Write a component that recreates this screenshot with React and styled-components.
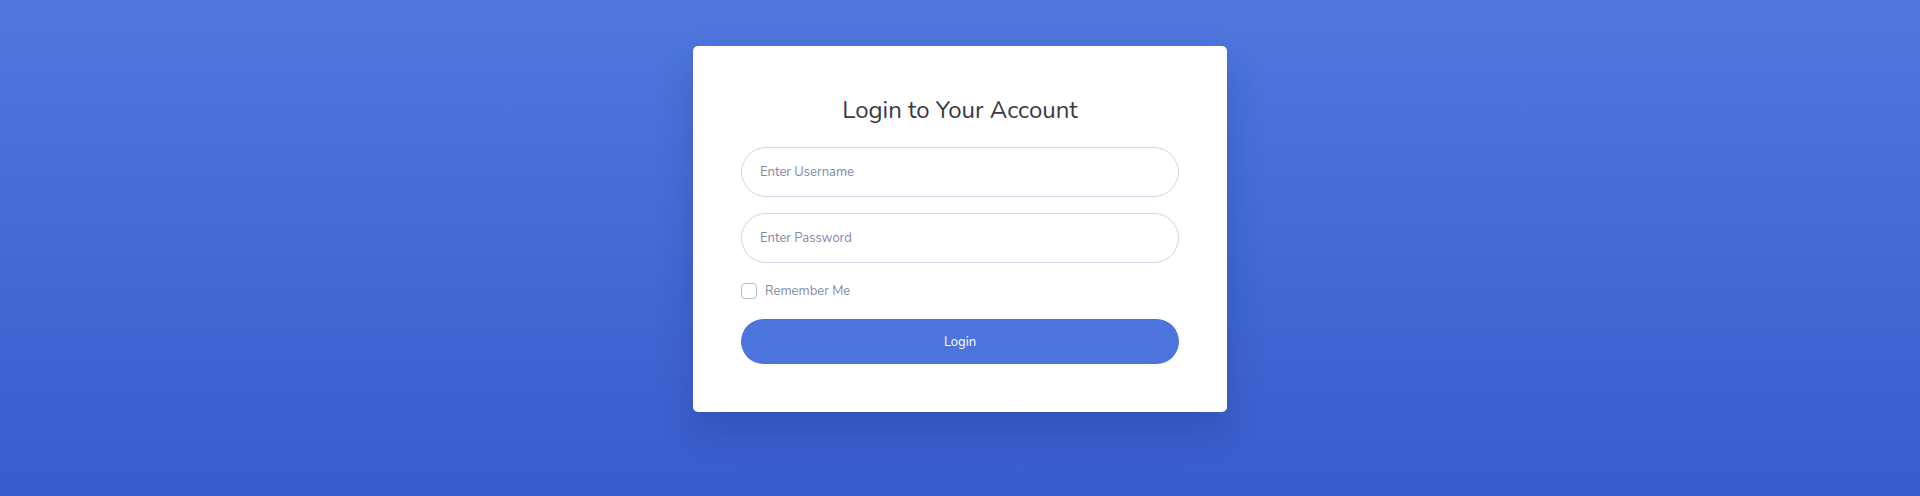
import React, { useState } from 'react'
import styled, { createGlobalStyle } from 'styled-components';

const GlobalStyle = createGlobalStyle`
    * {
        box-sizing: border-box;
    }
    body {
        margin: 0;
        font-family: "Nunito", "Lato", "Open Sans", sans-serif;
    }
`;

export default function App() {
    const [formValues, setFormValues] = useState({
        username: "",
        password: "",
        remember: false
    });

    const handleChange = (e) =>
        setFormValues({
            ...formValues,
            [e.target.name]: e.target.type === "checkbox" ? e.target.checked : e.target.value
        });

    return (
        <Container>
            <GlobalStyle />
            <Card>
                <Title>Login to Your Account</Title>
                <Field
                    type="text"
                    name="username"
                    placeholder="Enter Username"
                    value={formValues.username}
                    onChange={handleChange}
                />
                <Field
                    type="password"
                    name="password"
                    placeholder="Enter Password"
                    value={formValues.password}
                    onChange={handleChange}
                />
                <Remember>
                    <input
                        type="checkbox"
                        name="remember"
                        checked={formValues.remember}
                        onChange={handleChange}
                    />
                    <span>Remember Me</span>
                </Remember>
                <SubmitButton type="button">Login</SubmitButton>
            </Card>
        </Container>
    );
}

const Container = styled.div`
    height: 100vh;
    width: 100vw;
    display: flex;
    justify-content: center;
    align-items: flex-start;
    padding-top: 46px;
    background: linear-gradient(to bottom, #4f78df 0%, #385ccc 100%);
`;

const Card = styled.div`
    width: 534px;
    background-color: #ffffff;
    border-radius: 5px;
    padding: 48px;
    display: flex;
    flex-direction: column;
    box-shadow: 0 18px 36px rgba(20, 30, 90, 0.22);
`;

const Title = styled.h3`
    margin: 0 0 20px;
    text-align: center;
    font-weight: 400;
    font-size: 24px;
    line-height: 33px;
    color: #393a44;
`;

const Field = styled.input`
    height: 50px;
    width: 100%;
    margin-bottom: 16px;
    padding: 0 18px;
    border: 1px solid #d6d3e6;
    border-radius: 25px;
    font-family: inherit;
    font-size: 13px;
    color: #333;
    &::placeholder {
        color: #838aa3;
    }
    &:focus {
        outline: none;
    }
`;

const Remember = styled.label`
    display: flex;
    align-items: center;
    gap: 8px;
    margin: 4px 0 20px;
    height: 16px;
    line-height: 16px;
    font-size: 13px;
    color: #848aa2;
    input {
        appearance: none;
        margin: 0;
        width: 16px;
        height: 16px;
        border: 1px solid #b9b9d2;
        border-radius: 4px;
        background: #fff;
    }
`;

const SubmitButton = styled.button`
    height: 45px;
    border: none;
    border-radius: 23px;
    background-color: #4d74dd;
    color: #ffffff;
    font-family: inherit;
    font-size: 13px;
    cursor: pointer;
`;
